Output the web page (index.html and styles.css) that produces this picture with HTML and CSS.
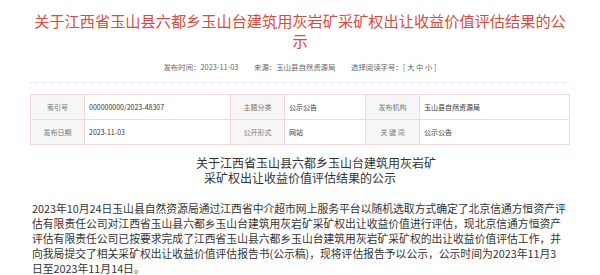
FILE: index.html
```html
<!DOCTYPE html>
<html lang="zh-CN">
<head>
    <meta charset="UTF-8">
    <meta name="viewport" content="width=device-width, initial-scale=1.0">
    <title>关于江西省玉山县六都乡玉山台建筑用灰岩矿采矿权出让收益价值评估结果的公示</title>
    <link rel="stylesheet" href="styles.css">
</head>
<body>
    <div class="page">
        <h1 class="title">关于江西省玉山县六都乡玉山台建筑用灰岩矿采矿权出让收益价值评估结果的公示</h1>
        <div class="meta">
            <span>发布时间：2023-11-03</span>
            <span>来源：玉山县自然资源局</span>
            <span>选择阅读字号：[ 大 中 小 ]</span>
        </div>
        <table class="info">
            <tr>
                <td class="label">索引号</td>
                <td class="val v1">000000000/2023-48307</td>
                <td class="label">主题分类</td>
                <td class="val v2">公示公告</td>
                <td class="label">发布机构</td>
                <td class="val">玉山县自然资源局</td>
            </tr>
            <tr>
                <td class="label">发布日期</td>
                <td class="val v1">2023-11-03</td>
                <td class="label">公开形式</td>
                <td class="val v2">网站</td>
                <td class="label">关 键 词</td>
                <td class="val">公示公告</td>
            </tr>
        </table>
        <h2 class="sub-title">关于江西省玉山县六都乡玉山台建筑用灰岩矿<br>采矿权出让收益价值评估结果的公示</h2>
        <p class="content">2023年10月24日玉山县自然资源局通过江西省中介超市网上服务平台以随机选取方式确定了北京信通方恒资产评<br>估有限责任公司对江西省玉山县六都乡玉山台建筑用灰岩矿采矿权出让收益价值进行评估，现北京信通方恒资产<br>评估有限责任公司已按要求完成了江西省玉山县六都乡玉山台建筑用灰岩矿采矿权的出让收益价值评估工作，并<br>向我局提交了相关采矿权出让收益价值评估报告书(公示稿)，现将评估报告予以公示，公示时间为2023年11月3<br>日至2023年11月14日。</p>
    </div>
</body>
</html>
```

FILE: styles.css
```css
body {
    margin: 0;
    font-family: "Noto Sans CJK SC", "Noto Sans", sans-serif;
    background: #fff;
    color: #333;
}
.page { width: 540px; margin: 0 auto; }
.title { margin: 0; padding-top: 10px; font-size: 15.2px; line-height: 20px; font-weight: normal; color: #e2473c; text-align: center; }
.meta { margin-top: 11px; padding-bottom: 9px; border-bottom: 1px dotted #ddd; font-size: 7.4px; line-height: 12px; color: #666; text-align: center; }
.meta span { margin: 0 7px; }
.info { width: 100%; margin-top: 11px; border-collapse: collapse; font-size: 7px; }
.info td { height: 24px; padding: 0 4px; border: 1px solid #f7d6d6; }
.info .label { width: 45px; background: #f6f6f6; color: #777; text-align: center; }
.info .val { color: #333; }
.info .v1 { width: 137px; }
.info .v2 { width: 72px; }
.sub-title { margin: 10px 0 0; font-size: 12px; line-height: 15px; font-weight: normal; color: #333; text-align: center; text-indent: 32px; }
.content { margin: 16px 0 0 2px; font-size: 10.8px; line-height: 15px; color: #333; }
```
